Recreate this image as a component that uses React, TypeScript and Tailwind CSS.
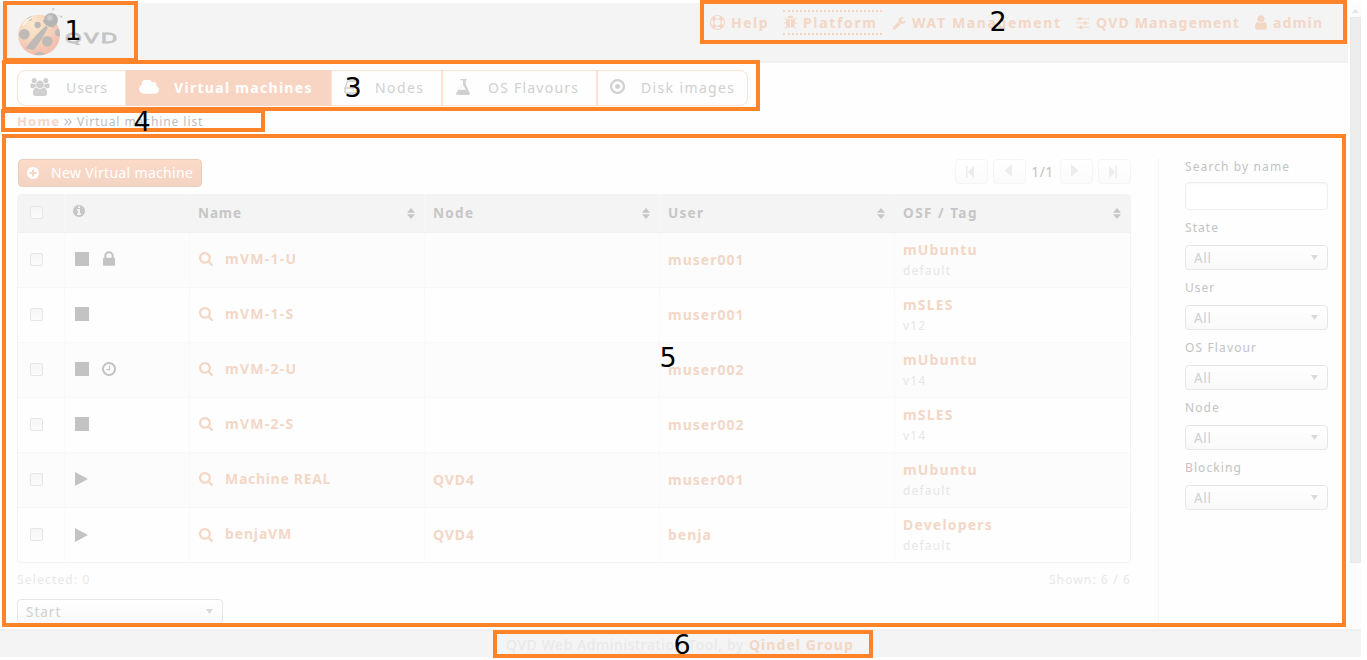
import type { ReactNode } from "react";

const RING =
  "M1664 896q0 209-103 385.5t-279.5 279.5-385.5 103-385.5-103-279.5-279.5-103-385.5 103-385.5 279.5-279.5 385.5-103 385.5 103 279.5 279.5 103 385.5z";

const PATHS = {
  help: "M896 0q182 0 348 71t286 191 191 286 71 348-71 348-191 286-286 191-348 71-348-71-286-191-191-286-71-348 71-348 191-286 286-191 348-71zm0 128q-190 0-361 90l194 194q82-28 167-28t167 28l194-194q-171-90-361-90zm-678 1129l194-194q-28-82-28-167t28-167l-194-194q-90 171-90 361t90 361zm678 407q190 0 361-90l-194-194q-82 28-167 28t-167-28l-194 194q171 90 361 90zm0-384q159 0 271.5-112.5t112.5-271.5-112.5-271.5-271.5-112.5-271.5 112.5-112.5 271.5 112.5 271.5 271.5 112.5zm484-217l194 194q90-171 90-361t-90-361l-194 194q28 82 28 167t-28 167z",
  bug: "M1696 960q0 26-19 45t-45 19h-224q0 171-67 290l208 209q19 19 19 45t-19 45q-18 19-45 19t-45-19l-198-197q-5 5-15 13t-42 28.5-65 36.5-82 29-97 13v-896h-128v896q-51 0-101.5-13.5t-87-33-66-39-43.5-32.5l-15-14-183 207q-20 21-48 21-24 0-43-16-19-18-20.5-44.5t15.5-46.5l202-227q-58-114-58-274h-224q-26 0-45-19t-19-45 19-45 45-19h224v-294l-173-173q-19-19-19-45t19-45 45-19 45 19l173 173h844l173-173q19-19 45-19t45 19 19 45-19 45l-173 173v294h224q26 0 45 19t19 45zm-480-576h-640q0-133 93.5-226.5t226.5-93.5 226.5 93.5 93.5 226.5z",
  wrench:
    "M448 1472q0-26-19-45t-45-19-45 19-19 45 19 45 45 19 45-19 19-45zm644-420l-682 682q-37 37-90 37-52 0-91-37l-106-108q-38-36-38-90 0-53 38-91l681-681q39 98 114.5 173.5t173.5 114.5zm634-435q0 39-23 106-47 134-164.5 217.5t-258.5 83.5q-185 0-316.5-131.5t-131.5-316.5 131.5-316.5 316.5-131.5q58 0 121.5 16.5t107.5 46.5q16 11 16 28t-16 28l-293 169v224l193 107q5-3 79-48.5t135.5-81 70.5-35.5q15 0 23.5 10t8.5 25z",
  sliders:
    "M480 1408v128h-352v-128h352zm352-128q26 0 45 19t19 45v256q0 26-19 45t-45 19h-256q-26 0-45-19t-19-45v-256q0-26 19-45t45-19h256zm160-384v128h-864v-128h864zm-640-512v128h-224v-128h224zm1312 1024v128h-736v-128h736zm-960-1152q26 0 45 19t19 45v256q0 26-19 45t-45 19h-256q-26 0-45-19t-19-45v-256q0-26 19-45t45-19h256zm640 512q26 0 45 19t19 45v256q0 26-19 45t-45 19h-256q-26 0-45-19t-19-45v-256q0-26 19-45t45-19h256zm320 128v128h-224v-128h224zm0-512v128h-864v-128h864z",
  user: "M1536 1399q0 109-62.5 187t-150.5 78h-854q-88 0-150.5-78t-62.5-187q0-85 8.5-160.5t31.5-152 58.5-131 94-89 134.5-34.5q131 128 313 128t313-128q76 0 134.5 34.5t94 89 58.5 131 31.5 152 8.5 160.5zm-256-887q0 159-112.5 271.5t-271.5 112.5-271.5-112.5-112.5-271.5 112.5-271.5 271.5-112.5 271.5 112.5 112.5 271.5z",
  users:
    "M593 896q-162 5-265 128h-134q-82 0-138-40.5t-56-118.5q0-353 124-353 6 0 43.5 21t97.5 42.5 119 21.5q67 0 133-23-5 37-5 66 0 139 81 256zm1071 637q0 120-73 189.5t-194 69.5h-874q-121 0-194-69.5t-73-189.5q0-53 3.5-103.5t14-109 26.5-108.5 43-97.5 62-81 85.5-53.5 111.5-20q10 0 43 21.5t73 48 107 48 135 21.5 135-21.5 107-48 73-48 43-21.5q61 0 111.5 20t85.5 53.5 62 81 43 97.5 26.5 108.5 14 109 3.5 103.5zm-1024-1277q0 106-75 181t-181 75-181-75-75-181 75-181 181-75 181 75 75 181zm704 384q0 159-112.5 271.5t-271.5 112.5-271.5-112.5-112.5-271.5 112.5-271.5 271.5-112.5 271.5 112.5 112.5 271.5zm576 225q0 78-56 118.5t-138 40.5h-134q-103-123-265-128 81-117 81-256 0-29-5-66 66 23 133 23 59 0 119-21.5t97.5-42.5 43.5-21q124 0 124 353zm-128-609q0 106-75 181t-181 75-181-75-75-181 75-181 181-75 181 75 75 181z",
  cloud:
    "M1984 1152q0 159-112.5 271.5t-271.5 112.5h-1088q-185 0-316.5-131.5t-131.5-316.5q0-132 71-241.5t187-163.5q-2-28-2-43 0-212 150-362t362-150q158 0 286.5 88t187.5 230q70-62 166-62 106 0 181 75t75 181q0 75-41 138 129 30 213 134.5t84 239.5z",
  flask:
    "M1527 1447q56 89 21.5 152.5t-140.5 63.5h-1024q-106 0-140.5-63.5t21.5-152.5l503-793v-399h-64q-26 0-45-19t-19-45 19-45 45-19h512q26 0 45 19t19 45-19 45-45 19h-64v399zm-779-725l-272 430h712l-272-430-20-31v-436h-128v436z",
  dot:
    "M1152 896q0 106-75 181t-181 75-181-75-75-181 75-181 181-75 181 75 75 181zm-256-544q-148 0-273 73t-198 198-73 273 73 273 198 198 273 73 273-73 198-198 73-273-73-273-198-198-273-73zm768 544q0 209-103 385.5t-279.5 279.5-385.5 103-385.5-103-279.5-279.5-103-385.5 103-385.5 279.5-279.5 385.5-103 385.5 103 279.5 279.5 103 385.5z",
  plus:
    "M1344 960v-128q0-26-19-45t-45-19h-256v-256q0-26-19-45t-45-19h-128q-26 0-45 19t-19 45v256h-256q-26 0-45 19t-19 45v128q0 26 19 45t45 19h256v256q0 26 19 45t45 19h128q26 0 45-19t19-45v-256h256q26 0 45-19t19-45z" + RING,
  info:
    "M1152 1376v-160q0-14-9-23t-23-9h-96v-512q0-14-9-23t-23-9h-320q-14 0-23 9t-9 23v160q0 14 9 23t23 9h96v320h-96q-14 0-23 9t-9 23v160q0 14 9 23t23 9h448q14 0 23-9t9-23zm-128-896v-160q0-14-9-23t-23-9h-192q-14 0-23 9t-9 23v160q0 14 9 23t23 9h192q14 0 23-9t9-23z" + RING,
  search:
    "M1216 832q0-185-131.5-316.5t-316.5-131.5-316.5 131.5-131.5 316.5 131.5 316.5 316.5 131.5 316.5-131.5 131.5-316.5zm512 832q0 52-38 90t-90 38q-54 0-90-38l-343-342q-179 124-399 124-143 0-273.5-55.5t-225-150-150-225-55.5-273.5 55.5-273.5 150-225 225-150 273.5-55.5 273.5 55.5 225 150 150 225 55.5 273.5q0 220-124 399l343 343q37 37 37 90z",
  lock: "M640 768h512v-192q0-106-75-181t-181-75-181 75-75 181v192zm832 96v576q0 40-28 68t-68 28h-960q-40 0-68-28t-28-68v-576q0-40 28-68t68-28h32v-192q0-184 132-316t316-132 316 132 132 316v192h32q40 0 68 28t28 68z",
  clock:
    "M1024 544v448q0 14-9 23t-23 9h-320q-14 0-23-9t-9-23v-64q0-14 9-23t23-9h224v-352q0-14 9-23t23-9h64q14 0 23 9t9 23zm416 352q0-148-73-273t-198-198-273-73-273 73-198 198-73 273 73 273 198 198 273 73 273-73 198-198 73-273zm224 0q0 209-103 385.5t-279.5 279.5-385.5 103-385.5-103-279.5-279.5-103-385.5 103-385.5 279.5-279.5 385.5-103 385.5 103 279.5 279.5 103 385.5z",
};

function Icon({ name, box, className }: { name: keyof typeof PATHS; box: string; className: string }) {
  return (
    <svg viewBox={box} className={`block shrink-0 ${className}`} fill="currentColor" fillRule="evenodd">
      <path d={PATHS[name]} />
    </svg>
  );
}

function Ladybug() {
  return (
    <svg viewBox="48 22 144 150" className="block h-[50px] w-[48px]" opacity="0.85">
      <defs>
        <radialGradient id="shell" cx="0.35" cy="0.25" r="0.85">
          <stop offset="0" stopColor="#fbe8c8" />
          <stop offset="0.4" stopColor="#f9d4b6" />
          <stop offset="0.75" stopColor="#f5bba6" />
          <stop offset="1" stopColor="#eeb5a4" />
        </radialGradient>
        <radialGradient id="head" cx="0.4" cy="0.35" r="0.7">
          <stop offset="0" stopColor="#d2d2d2" />
          <stop offset="0.5" stopColor="#a9a7a6" />
          <stop offset="1" stopColor="#b4b2b0" />
        </radialGradient>
        <clipPath id="body">
          <ellipse cx="117" cy="106" rx="63" ry="61" />
        </clipPath>
      </defs>
      <ellipse cx="117" cy="106" rx="63" ry="61" fill="url(#shell)" />
      <g clipPath="url(#body)" fill="#b6b0ad">
        <path d="M138 78Q108 104 76 146L101 152Q128 116 144 84z" />
        <circle cx="73" cy="104" r="16" />
        <circle cx="113" cy="76" r="9.5" />
        <circle cx="142" cy="125" r="16" />
        <circle cx="176" cy="99" r="11" />
        <ellipse cx="118" cy="166" rx="16" ry="9" />
        <circle cx="88" cy="56" r="8" />
        <path d="M128 62Q134 82 162 84L168 54z" />
      </g>
      <path d="M67 76Q78 54 104 50Q84 62 70 80z" fill="#fdf3e4" />
      <circle cx="153" cy="61" r="21" fill="url(#head)" />
      <path d="M156 42Q156 34 160 30M170 50Q178 46 184 50" stroke="#dcdad9" strokeWidth="2" fill="none" />
      <circle cx="160" cy="28" r="3" fill="#c2bfbe" />
      <circle cx="184" cy="51" r="3" fill="#c2bfbe" />
    </svg>
  );
}

function NavItem({ icon, box, iconClass, text, className, textClass }: { icon: keyof typeof PATHS; box: string; iconClass: string; text: string; className: string; textClass: string }) {
  return (
    <div className={`flex h-[25px] shrink-0 items-center ${className}`}>
      <Icon name={icon} box={box} className={iconClass} />
      <span className={textClass}>{text}</span>
    </div>
  );
}

function Tab({ className, icon, iconBox, text, textClass }: { className: string; icon: ReactNode; iconBox: string; text: string; textClass: string }) {
  return (
    <div className={`flex h-9 shrink-0 items-center border ${className}`}>
      <div className={`shrink-0 ${iconBox}`}>{icon}</div>
      <span className={`pb-px ${textClass}`}>{text}</span>
    </div>
  );
}

function Check() {
  return <div className="h-[13px] w-[13px] rounded-[2px] border border-[#e6e6e6] bg-linear-to-b from-[#f6f6f6] to-[#fbfbfb]" />;
}

function Caret({ className }: { className: string }) {
  return (
    <svg viewBox="0 0 7 5" className={`h-[5px] w-[7px] ${className}`} fill="#dadada">
      <path d="M0 0h7L3.5 5z" />
    </svg>
  );
}

function Select({ label, className, textClass }: { label: string; className: string; textClass: string }) {
  return (
    <div className={`flex h-[25px] items-center justify-between rounded-[4px] border border-[#e6e6e6] bg-linear-to-b from-white to-[#f9f9f9] pr-[9px] pl-2 text-[13.5px] text-[#d0d0d0] ${className}`}>
      <span className={`pt-[2px] ${textClass}`}>{label}</span>
      <Caret className="mb-px" />
    </div>
  );
}

function PageButton({ d, className }: { d: string; className: string }) {
  return (
    <div className={`flex h-[25px] w-[33px] items-center justify-center rounded-[4px] border border-[#f5f5f5] bg-linear-to-b from-white to-[#fbfbfb] ${className}`}>
      <svg viewBox="0 0 9 14" className="h-[14px] w-[9px]" fill="#ededed">
        <path d={d} />
      </svg>
    </div>
  );
}

function HeadCell({ label, textClass }: { label: string; textClass: string }) {
  return (
    <div className="flex w-[235px] items-center justify-between border-r border-dotted border-[#f8f8f8] pr-[9px] pl-2 last:border-r-0">
      <span className={textClass}>{label}</span>
      <svg viewBox="0 0 8 11" className="h-[11px] w-2" fill="#c6c6c6">
        <path d="M0 4.7L4 0l4 4.7zM0 6.3h8L4 11z" />
      </svg>
    </div>
  );
}

type Row = {
  state: "stop" | "play";
  extra?: "lock" | "clock";
  name: string;
  nameClass: string;
  node: string;
  user: string;
  osf: string;
  tag: string;
};

const rows: Row[] = [
  { state: "stop", extra: "lock", name: "mVM-1-U", nameClass: "tracking-[1.25px]", node: "", user: "muser001", osf: "mUbuntu", tag: "default" },
  { state: "stop", name: "mVM-1-S", nameClass: "tracking-[1.25px]", node: "", user: "muser001", osf: "mSLES", tag: "v12" },
  { state: "stop", extra: "clock", name: "mVM-2-U", nameClass: "tracking-[1.25px]", node: "", user: "muser002", osf: "mUbuntu", tag: "v14" },
  { state: "stop", name: "mVM-2-S", nameClass: "tracking-[1.25px]", node: "", user: "muser002", osf: "mSLES", tag: "v14" },
  { state: "play", name: "Machine REAL", nameClass: "tracking-[0.7px]", node: "QVD4", user: "muser001", osf: "mUbuntu", tag: "default" },
  { state: "play", name: "benjaVM", nameClass: "tracking-[0.85px]", node: "QVD4", user: "benja", osf: "Developers", tag: "default" },
];

const filters = [
  ["State", "tracking-[1.06px]"],
  ["User", "tracking-[1px]"],
  ["OS Flavour", "tracking-[1.13px]"],
  ["Node", "tracking-[1.1px]"],
  ["Blocking", "tracking-[1.11px]"],
];

const markers = [
  { n: 1, frame: "left-[3px] top-[1px] w-[135px] h-[61px]", num: "left-[63px] top-[21px]" },
  { n: 2, frame: "left-[700px] top-0 w-[647px] h-[44px]", num: "left-[988px] top-[12px]" },
  { n: 3, frame: "left-[2px] top-[60px] w-[758px] h-[51px]", num: "left-[343px] top-[78px]" },
  { n: 4, frame: "left-[1px] top-[109px] w-[264px] h-[23px]", num: "left-[132px] top-[112px]" },
  { n: 5, frame: "left-[2px] top-[134px] w-[1344px] h-[493px]", num: "left-[658px] top-[348px]" },
  { n: 6, frame: "left-[493px] top-[630px] w-[380px] h-[28px]", num: "left-[672px] top-[635px]" },
];

export default function App() {
  return (
    <div className="relative flex h-[660px] w-[1367px] flex-col overflow-hidden bg-white pt-[3px] font-['Noto_Sans',sans-serif] whitespace-nowrap">
      <div className="flex h-[626px] shrink-0">
        <div className="flex w-[1348px] shrink-0 flex-col overflow-hidden bg-[#fefefe]">
          <header className="flex h-[60px] shrink-0 border-b-2 border-[#f0f0f0] bg-[#f4f4f4]">
            <div className="flex w-[710px] shrink-0 pt-1 pl-4">
              <Ladybug />
              <span className="mt-[21px] ml-px h-5 origin-left scale-x-[1.47] font-['DejaVu_Sans'] text-[14.5px] leading-5 tracking-[1.5px] text-[#c4c4c4] [-webkit-text-stroke:0.8px_#c4c4c4]">QVD</span>
            </div>
            <nav className="flex pt-[7px] text-[14px] font-bold text-[#f3d7c6]">
              <NavItem icon="help" box="0 0 1792 1792" iconClass="w-[15px] h-[15px] mr-[6px]" text="Help" className="w-[73px]" textClass="tracking-[1.47px]" />
              <NavItem icon="bug" box="0 0 1792 1792" iconClass="w-[15px] h-[15px] mr-[5px]" text="Platform" className="w-[99px] border-y-2 border-dotted border-[#f3d7c6]" textClass="tracking-[1.66px]" />
              <NavItem icon="wrench" box="0 0 1792 1792" iconClass="w-[14px] h-[14px] mr-[6px]" text="WAT Management" className="ml-[10px] w-[184px]" textClass="tracking-[1.63px]" />
              <NavItem icon="sliders" box="128 0 1536 1792" iconClass="w-[13px] h-[15px] mr-[7px]" text="QVD Management" className="w-[179px]" textClass="tracking-[1.2px]" />
              <NavItem icon="user" box="256 0 1280 1792" iconClass="w-[12px] h-[17px] mr-[6px]" text="admin" className="w-[80px]" textClass="tracking-[1.21px]" />
            </nav>
          </header>

          <div className="mt-[7px] ml-[17px] flex text-[14px] text-[#d0d0d0]">
            <Tab className="w-[109px] rounded-l-[8px] border-[#fce1d5] pl-3" iconBox="w-9" icon={<Icon name="users" box="0 0 1920 1792" className="mb-[3px] h-[18px] w-[20px]" />} text="Users" textClass="tracking-[0.92px]" />
            <Tab className="w-[205px] border-[#f8d5c3] bg-[#f8d5c3] pl-3 font-bold text-white" iconBox="w-[35px]" icon={<Icon name="cloud" box="64 256 1920 1280" className="mb-[3px] h-[14px] w-[20px]" />} text="Virtual machines" textClass="tracking-[1.3px]" />
            <Tab
              className="w-[111px] border-[#fce1d5] pl-3"
              iconBox="w-[31px]"
              icon={
                <svg viewBox="0 0 16 14" className="mb-[3px] block h-[14px] w-4" fill="none" stroke="currentColor" strokeWidth="1.4">
                  <path d="M1 8L3.5 1.6Q3.8 1 4.5 1h7Q12.200 1 12.500 1.600L15 8v4q0 1-1 1H2q-1 0-1-1zM1 8h14" />
                  <path d="M9 10.500h1.200M11.800 10.500H13" />
                </svg>
              }
              text="Nodes"
              textClass="tracking-[1.42px]"
            />
            <Tab className="w-[155px] border-[#fce1d5] pl-3" iconBox="w-[33px]" icon={<Icon name="flask" box="128 128 1536 1536" className="mb-[3px] h-4 w-4" />} text="OS Flavours" textClass="tracking-[1.23px]" />
            <Tab className="w-[151px] rounded-r-[8px] border-[#fce1d5] pl-3" iconBox="w-[31px]" icon={<Icon name="dot" box="128 128 1536 1536" className="mb-[3px] h-[15px] w-[15px]" />} text="Disk images" textClass="tracking-[1.36px]" />
          </div>

          <div className="mt-[6px] ml-[17px] flex h-5 items-center">
            <span className="w-[47px] text-[13px] font-bold tracking-[1.16px] text-[#f3d7c6]">Home</span>
            <svg viewBox="0 0 8 8" className="mr-[5px] h-2 w-2" fill="none" stroke="#bdbdbd" strokeWidth="1.1">
              <path d="M0.700 0.800L3.700 4L0.700 7.200M4.200 0.800L7.200 4L4.200 7.200" />
            </svg>
            <span className="text-[12px] tracking-[0.93px] text-[#bdbdbd]">Virtual machine list</span>
          </div>

          <div className="mt-[27px] flex h-[470px] shrink-0">
            <section className="ml-[17px] w-[1114px] shrink-0">
              <div className="flex h-[35px] justify-between">
                <button className="ml-px flex h-[28px] w-[184px] items-center rounded-[4px] border border-[#eccdbc] bg-linear-to-b from-[#fddac8] to-[#f3d3c3] pl-2 text-white">
                  <Icon name="plus" box="128 128 1536 1536" className="mr-3 h-3 w-3" />
                  <span className="pb-[2px] text-[14px] tracking-[0.33px]">New Virtual machine</span>
                </button>
                <div className="flex h-[25px]">
                  <PageButton d="M1 1h1.600v12H1zM9 1v12L2.800 7z" className="mr-[5px] pr-[4px]" />
                  <PageButton d="M8 0v13L0.500 6.500z" className="pr-[3px] pb-[2px]" />
                  <span className="flex w-[34px] items-center justify-center pr-px text-[14px] tracking-[0.39px] text-[#c3c3c3]">1/1</span>
                  <PageButton d="M1 0v13L8.500 6.500z" className="mr-[5px] pr-[5px] pb-[2px]" />
                  <PageButton d="M6.400 1H8v12H6.400zM0 1v12L6.200 7z" className="pr-[3px]" />
                </div>
              </div>

              <div className="h-[369px] overflow-hidden rounded-[4px] border border-t-0 border-[#f3f3f3]">
                <div className="flex h-[39px] border-b border-dotted border-[#f0f0f0] bg-[#f4f4f4] text-[13.5px] font-bold text-[#c6c6c6]">
                  <div className="flex w-[47px] items-center border-r border-dotted border-[#f8f8f8] pb-px pl-3">
                    <Check />
                  </div>
                  <div className="flex w-[125px] items-center border-r border-dotted border-[#f8f8f8] pb-1 pl-2">
                    <Icon name="info" box="128 128 1536 1536" className="h-3 w-3" />
                  </div>
                  <HeadCell label="Name" textClass="tracking-[0.9px]" />
                  <HeadCell label="Node" textClass="tracking-[1.33px]" />
                  <HeadCell label="User" textClass="tracking-[1.3px]" />
                  <HeadCell label="OSF / Tag" textClass="tracking-[1.5px]" />
                </div>
                {rows.map((r) => (
                  <div key={r.name} className="flex h-[55px] border-b border-dotted border-[#f4f4f4] text-[14px] font-bold text-[#f3d7c6] last:border-b-0 even:bg-[#fcfcfc]">
                    <div className="flex w-[47px] items-center border-r border-dotted border-[#f6f6f6] pb-[2px] pl-3">
                      <Check />
                    </div>
                    <div className="flex w-[125px] items-center border-r border-dotted border-[#f6f6f6] pb-[2px] pl-[10px] text-[#c3c3c3]">
                      {r.state === "stop" ? (
                        <div className="h-[14px] w-[14px] bg-current" />
                      ) : (
                        <svg viewBox="0 0 13 14" className="h-[14px] w-[13px]" fill="currentColor">
                          <path d="M0 0L13 7L0 14z" />
                        </svg>
                      )}
                      {r.extra === "lock" && <Icon name="lock" box="320 128 1152 1408" className="mb-px ml-[14px] h-[15px] w-[12px]" />}
                      {r.extra === "clock" && <Icon name="clock" box="128 128 1536 1536" className="ml-[13px] h-[14px] w-[14px]" />}
                    </div>
                    <div className="flex w-[235px] items-center border-r border-dotted border-[#f6f6f6] pb-[2px] pl-[9px]">
                      <Icon name="search" box="64 128 1664 1664" className="mr-3 h-[14px] w-[14px]" />
                      <span className={`pb-[2px] ${r.nameClass}`}>{r.name}</span>
                    </div>
                    <div className="flex w-[235px] items-center border-r border-dotted border-[#f6f6f6] pb-[2px] pl-2">
                      <span className="tracking-[0.9px]">{r.node}</span>
                    </div>
                    <div className="flex w-[235px] items-center border-r border-dotted border-[#f6f6f6] pb-[2px] pl-2">
                      <span className="tracking-[1px]">{r.user}</span>
                    </div>
                    <div className="flex w-[235px] flex-col pt-[7px] pl-2">
                      <span className="h-5 leading-5 tracking-[1.18px]">{r.osf}</span>
                      <span className="h-[21px] text-[12px] leading-[21px] font-normal tracking-[1.19px] text-[#e6e6e6]">{r.tag}</span>
                    </div>
                  </div>
                ))}
              </div>

              <div className="flex h-[36px] justify-between pt-[6px] text-[12px] leading-[22px] text-[#e8e8e8]">
                <span className="tracking-[1.18px]">Selected: 0</span>
                <span className="tracking-[1.12px]">Shown: 6 / 6</span>
              </div>
              <Select label="Start" className="w-[206px]" textClass="tracking-[1px]" />
            </section>

            <aside className="ml-[27px] w-[171px] shrink-0 border-l border-dotted border-[#f0f0f0] pl-[26px] text-[12px] text-[#c3c3c3]">
              <div className="h-[23px] leading-4 tracking-[1.11px]">Search by name</div>
              <div className="mb-[7px] h-[28px] w-[143px] rounded-[4px] border border-[#eeeeee] bg-white shadow-[inset_0_1px_2px_#f6f6f6]" />
              {filters.map(([label, cls]) => (
                <div key={label} className="h-[60px]">
                  <div className={`h-[28px] leading-[22px] ${cls}`}>{label}</div>
                  <Select label="All" className="w-[143px]" textClass="tracking-[0.7px]" />
                </div>
              ))}
            </aside>
          </div>
        </div>

        <div className="ml-[2px] flex w-[11px] flex-col items-center bg-[#fcfcfc]">
          <svg viewBox="0 0 7 4" className="mt-[6px] mb-1 h-1 w-[7px]" fill="#e6e6e6">
            <path d="M0 4h7L3.500 0z" />
          </svg>
          <div className="h-[546px] w-[11px] border border-[#e9e9e9] bg-[#ededed]" />
        </div>
      </div>

      <footer className="flex h-[28px] w-[1361px] shrink-0 items-center border-t-2 border-[#f1f1f1] bg-[#f4f4f4] pl-[506px] text-[14px]">
        <span className="w-[243px] tracking-[0.66px] text-[#e8e8e8]">QVD Web Administration Tool, by</span>
        <span className="font-bold tracking-[1.05px] text-[#f3d7c6]">Qindel Group</span>
      </footer>

      {markers.map((m) => (
        <div key={m.n}>
          <div className={`absolute border-4 border-[#ff8429] ${m.frame}`} />
          <div className={`absolute z-10 h-5 w-5 text-center font-['DejaVu_Sans'] text-[27px] leading-5 text-black ${m.num}`}>{m.n}</div>
        </div>
      ))}
    </div>
  );
}
